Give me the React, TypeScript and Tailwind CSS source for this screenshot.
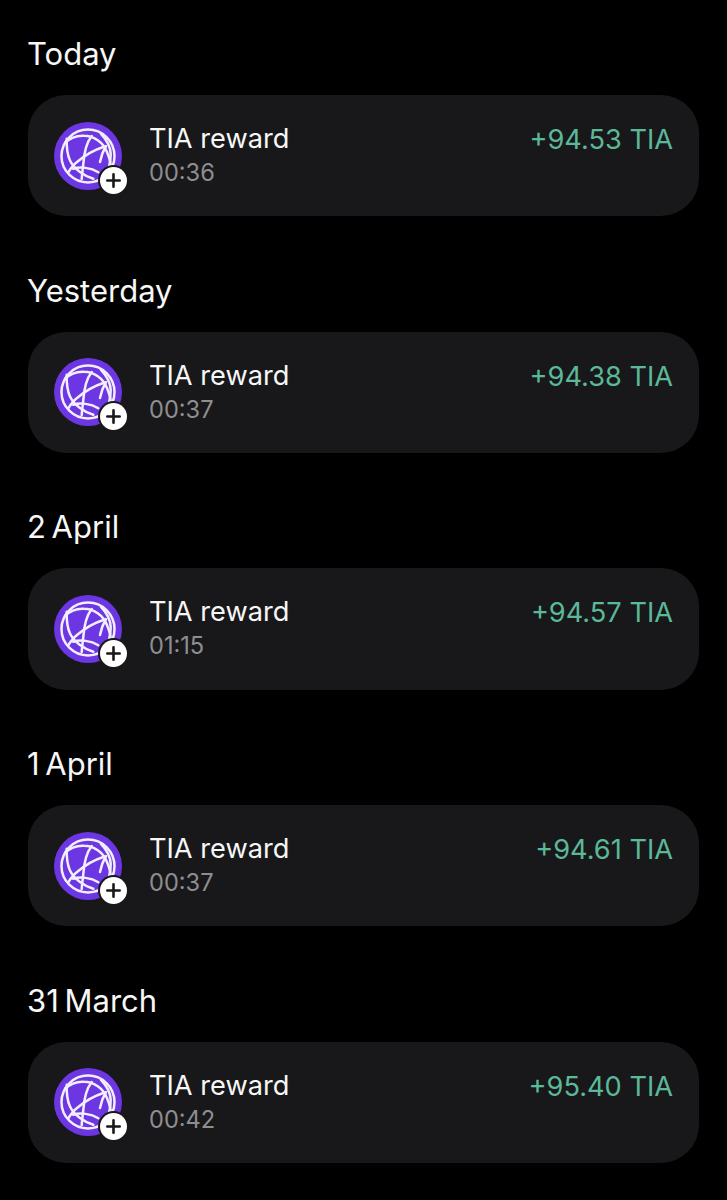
import React from 'react'

type Reward = {
  date: string
  time: string
  amount: string
}

const rewards: Reward[] = [
  { date: 'Today', time: '00:36', amount: '+94.53 TIA' },
  { date: 'Yesterday', time: '00:37', amount: '+94.38 TIA' },
  { date: '2 April', time: '01:15', amount: '+94.57 TIA' },
  { date: '1 April', time: '00:37', amount: '+94.61 TIA' },
  { date: '31 March', time: '00:42', amount: '+95.40 TIA' },
]

function TokenIcon() {
  return (
    <div className="relative w-[68px] h-[68px] shrink-0">
      <svg width="68" height="68" viewBox="0 0 68 68" fill="none">
        <circle cx="34" cy="34" r="34" fill="#6d36e3" />
        <g stroke="#f3eefc" strokeWidth="2.5" strokeLinecap="round">
          <circle cx="34" cy="34" r="26.5" />
          <path d="M11 21C17 15 24 13.5 30 13.8C40 14 49 20 53 30C55 35 56.5 39 56.7 43.5" />
          <path d="M12.7 16.8C12.5 24 13 32 16 38.5C20 47 30 54 39.3 56.8" />
          <path d="M37.7 14C33 20 30 32 29.3 41.8C28.8 47 28 52 27.7 57" />
          <path d="M14.3 50.2C17 46 19 43 22.7 40.2C30 34 40 28 49.3 25" />
          <path d="M47 11.8C53 18 56.5 25 56.7 32C56.7 41 54 50 50 56.8" />
          <path d="M19.3 46.8C26 44.5 37 45.5 44.3 50.2" />
          <path d="M52 24C49 29 47 34 46 40" />
        </g>
      </svg>
      <div className="absolute left-[43.5px] top-[43px] w-[31px] h-[31px] rounded-full bg-[#18181a] flex items-center justify-center">
        <div className="w-[27px] h-[27px] rounded-full bg-white flex items-center justify-center">
          <svg width="15" height="15" viewBox="0 0 15 15" fill="none">
            <path d="M7.5 1.3V13.7M1.3 7.5H13.7" stroke="#18181a" strokeWidth="2.6" strokeLinecap="round" />
          </svg>
        </div>
      </div>
    </div>
  )
}

function RewardSection({ reward }: { reward: Reward }) {
  return (
    <section>
      <h2 className="h-[36px] mb-[23px] -ml-[1px] text-[31px] leading-[36px] font-normal [word-spacing:-3px] text-[#f7f7f7]">
        {reward.date}
      </h2>
      <div className="h-[121.3px] rounded-[38px] bg-[#18181a] px-[26px] flex items-center">
        <TokenIcon />
        <div className="ml-[27px] flex-1">
          <p className="text-[27.2px] leading-[34px] text-[#f7f7f7]">TIA reward</p>
          <p className="mt-[1px] text-[23.6px] leading-[32px] text-[#8e8e90]">{reward.time}</p>
        </div>
        <p className="self-start mt-[28px] text-[27.2px] leading-[34px] text-[#5bb899]">{reward.amount}</p>
      </div>
    </section>
  )
}

export default function App() {
  return (
    <div className="min-h-[1200px] bg-black pt-[36px] px-[28px] font-['Inter',sans-serif] flex flex-col gap-[56.37px]">
      {rewards.map((reward) => (
        <RewardSection key={reward.date} reward={reward} />
      ))}
    </div>
  )
}
